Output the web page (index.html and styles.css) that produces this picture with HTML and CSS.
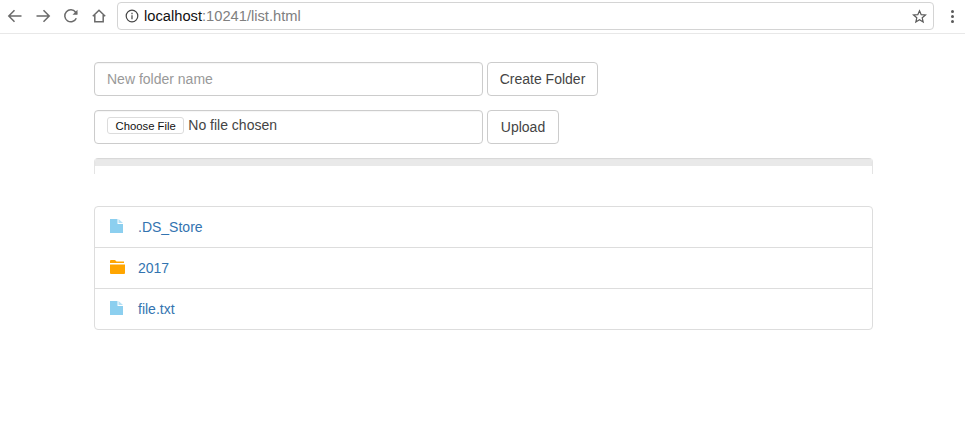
FILE: index.html
```html
<!DOCTYPE html>
<html lang="en">
<head>
<meta charset="utf-8">
<title>list.html</title>
<link rel="stylesheet" href="styles.css">
</head>
<body>
<header class="toolbar">
  <svg class="nav-icon" width="16" height="16" viewBox="0 0 16 16"><path d="M14.5 8H2M7.5 2.2 1.8 8l5.7 5.8"/></svg>
  <svg class="nav-icon" width="16" height="16" viewBox="0 0 16 16"><path d="M1.5 8H14M8.5 2.2 14.2 8l-5.700 5.800"/></svg>
  <svg class="nav-icon" width="16" height="16" viewBox="0 0 16 16"><path d="M13.300 10.200A6 6 0 1 1 12.600 4.200L14 5.600"/><path class="fill" d="M14.500 1.800V6.800H9.500Z"/></svg>
  <svg class="nav-icon home" width="16" height="16" viewBox="0 0 16 16"><path d="M1.800 8.200 8 2.200l6.200 6M3.800 7v6.800h8.400V7"/></svg>
  <div class="omnibox">
    <svg class="info" width="14" height="14" viewBox="0 0 14 14"><circle cx="7" cy="7" r="5.800"/><path d="M7 6.200V10.200M7 3.800V5.200"/></svg>
    <span class="url"><span class="host">localhost</span>:10241/list.html</span>
    <svg class="star" width="15" height="15" viewBox="0 0 16 16"><path d="M8 1.800 9.800 6l4.600.4-3.500 3 1 4.500L8 11.500 4.100 13.900l1-4.500-3.500-3L6.200 6Z"/></svg>
  </div>
  <div class="menu"><i></i><i></i><i></i></div>
</header>
<main class="content">
  <form class="form-row">
    <input class="field" type="text" placeholder="New folder name">
    <button class="btn btn-create" type="button">Create Folder</button>
  </form>
  <form class="form-row">
    <div class="field file-field"><input class="file-input" type="file"></div>
    <button class="btn btn-upload" type="button">Upload</button>
  </form>
  <div class="progress"><div class="progress-track"></div></div>
  <ul class="list">
    <li class="row">
      <svg class="file-icon" width="13" height="14" viewBox="0 0 13 14"><path d="M0 0H7.500V5H13V14H0Z"/><path class="fold" d="M8.500 0 13 4H8.500Z"/></svg>
      <a href="#">.DS_Store</a>
    </li>
    <li class="row">
      <svg class="folder-icon" width="15" height="14" viewBox="0 0 15 14"><path d="M0 1Q0 0 1 0H5L6.500 1.500H14V3H0Z"/><path d="M0 4.500H15V13Q15 14 14 14H1Q0 14 0 13Z"/></svg>
      <a href="#">2017</a>
    </li>
    <li class="row">
      <svg class="file-icon" width="13" height="14" viewBox="0 0 13 14"><path d="M0 0H7.500V5H13V14H0Z"/><path class="fold" d="M8.500 0 13 4H8.500Z"/></svg>
      <a href="#">file.txt</a>
    </li>
  </ul>
</main>
</body>
</html>
```
FILE: styles.css
```css
* { box-sizing: border-box; }
html, body { margin: 0; background: #fff; }
body {
  font-family: "Liberation Sans", Arial, sans-serif;
  font-size: 14px;
  line-height: 20px;
  color: #444;
  height: 430px;
  overflow: hidden;
}
.toolbar {
  display: flex;
  align-items: center;
  height: 34px;
  padding: 0 0 1px 7px;
  border-bottom: 1px solid #e8e8e8;
}
.nav-icon { fill: none; stroke: #6a6a6a; stroke-width: 1.5; margin-right: 12px; flex: none; }
.nav-icon .fill { fill: #6a6a6a; stroke: none; }
.nav-icon.home { margin-right: 10px; }
.omnibox {
  display: flex;
  align-items: center;
  width: 817px;
  height: 28px;
  padding: 0 6px 0 7px;
  border: 1px solid #d4d4d4;
  border-radius: 4px;
  flex: none;
}
.info { fill: none; stroke: #444; stroke-width: 1.200; flex: none; }
.url { margin-left: 5px; flex: 1; font-size: 14.7px; color: #808080; }
.host { color: #111; }
.star { fill: none; stroke: #5a5a5a; stroke-width: 1.300; flex: none; }
.menu { display: flex; flex-direction: column; gap: 2px; margin-left: 17px; }
.menu i { display: block; width: 3px; height: 3px; border-radius: 50%; background: #5a5a5a; }
.content { padding: 28px 92px 0 94px; }
.form-row { display: flex; gap: 4px; margin: 0 0 14px; }
.field {
  width: 389px;
  height: 34px;
  padding: 6px 12px;
  border: 1px solid #ccc;
  border-radius: 4px;
  background: #fff;
  font: inherit;
  color: #555;
  box-shadow: inset 0 1px 1px rgba(0,0,0,.04);
}
.field::placeholder { color: #999; opacity: 1; }
.file-field { display: flex; align-items: center; padding-bottom: 11px; }
.file-input { font: inherit; font-size: 14px; color: #444; width: 100%; }
.file-input::file-selector-button {
  font: 11.300px "Liberation Sans", Arial, sans-serif;
  height: 17px;
  padding: 0 7.500px;
  margin-right: 4px;
  color: #111;
  background: #fff;
  border: 1px solid #dcdcdc;
  border-radius: 3px;
}
.btn {
  height: 34px;
  padding: 6px 0;
  font: inherit;
  color: #444;
  background: #fff;
  border: 1px solid #ccc;
  border-radius: 4px;
}
.btn-create { width: 111px; }
.btn-upload { width: 72px; }
.progress {
  width: 779px;
  height: 16px;
  border: solid #e4e4e4;
  border-width: 0 1px;
  border-radius: 4px 4px 0 0;
  overflow: hidden;
  margin-bottom: 32px;
}
.progress-track { height: 8px; background: #e9e9e9; box-shadow: inset 0 1px 1px rgba(0,0,0,.08); }
.list {
  width: 779px;
  margin: 0;
  padding: 0;
  list-style: none;
  border: 1px solid #ddd;
  border-radius: 4px;
}
.row {
  display: flex;
  align-items: center;
  height: 41px;
  padding: 0 15px;
  border-bottom: 1px solid #ddd;
}
.row:last-child { border-bottom: 0; height: 40px; }
.row a { color: #3374b0; text-decoration: none; margin-left: 13px; }
.file-icon { fill: #8ccfef; flex: none; margin: 0 2px 2px 0; }
.file-icon .fold { fill: #b5e0f5; }
.folder-icon { fill: #ffa500; flex: none; margin-bottom: 2px; }
```
